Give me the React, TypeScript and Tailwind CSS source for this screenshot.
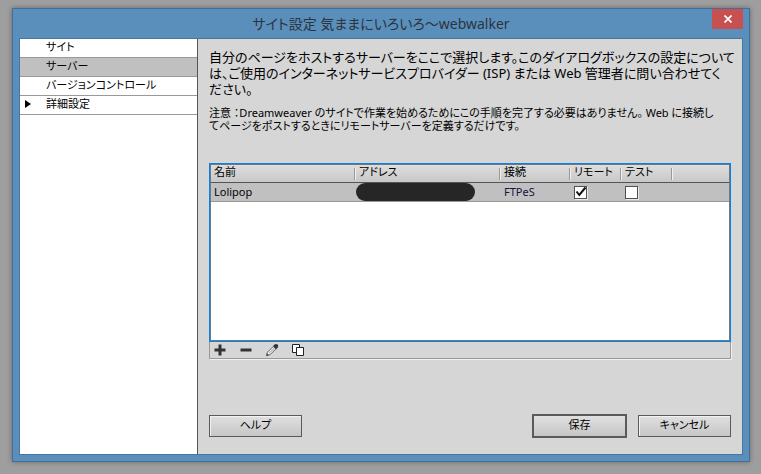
import { useState } from "react";

const categories = [
  { name: "サイト" },
  { name: "サーバー", selected: true },
  { name: "バージョンコントロール" },
  { name: "詳細設定", expandable: true },
];

const columns = ["名前", "アドレス", "接続", "リモート", "テスト"];

const buttonStyle =
  "h-[22px] w-[93px] border border-[#5a5a5a] bg-gradient-to-b from-[#e0e0e0] to-[#c6c6c6] pb-0.5 leading-4 shadow-[inset_1px_1px_0_#f2f2f2]";

function Checkbox({ label, initial }: { label: string; initial: boolean }) {
  const [checked, setChecked] = useState(initial);
  return (
    <span className="relative block size-[13px]">
      <input
        type="checkbox"
        aria-label={label}
        checked={checked}
        onChange={(e) => setChecked(e.target.checked)}
        className="block size-[13px] appearance-none border border-[#505050] bg-white shadow-[1px_1px_0_#e8e8e8]"
      />
      {checked && (
        <svg
          viewBox="0 0 13 13"
          className="pointer-events-none absolute inset-0 size-[13px]"
          fill="none"
          stroke="#111"
          strokeWidth="2"
        >
          <path d="M2.5 5.5 L5.3 9 L11.5 1.5" />
        </svg>
      )}
    </span>
  );
}

export default function App() {
  return (
    <main className="flex min-h-screen bg-[#9e9e9e] pt-2 pr-[11px] pb-3 pl-3 font-['Noto_Sans','Noto_Sans_CJK_JP',sans-serif] text-[11px] text-black [font-feature-settings:'palt']">
      <div className="flex min-w-0 flex-1 flex-col border border-[#3f6f9c] bg-[#5a8fbc] px-[6px] pb-[6px] shadow-[0_0_5px_rgba(0,0,0,0.35)]">
        {/* Title bar */}
        <header className="relative flex h-[29px] items-center justify-center">
          <h1 className="text-sm leading-6 text-[#2c343c]">
            サイト設定 気ままにいろいろ～webwalker
          </h1>
          <button
            aria-label="閉じる"
            className="absolute top-0 right-0 flex h-5 w-[31px] items-center justify-center bg-[#c75050]"
          >
            <svg
              viewBox="0 0 8 8"
              className="size-2"
              stroke="white"
              strokeWidth="1.7"
            >
              <path d="M0.5 0.5 L7.5 7.5 M7.5 0.5 L0.5 7.5" />
            </svg>
          </button>
        </header>

        <div className="flex flex-1 border border-[#47779f] bg-[#d6d6d6]">
          {/* Categories */}
          <nav className="w-[178px] shrink-0 border-r border-[#555] bg-white">
            <ul>
              {categories.map((item) => (
                <li
                  key={item.name}
                  className={`border-b border-[#999] ${item.selected ? "bg-[#c0c0c0]" : ""}`}
                >
                  <a
                    href="#"
                    className="flex h-[18px] items-center pb-0.5 pl-[5px]"
                  >
                    <span className="w-[21px]">
                      {item.expandable && (
                        <svg viewBox="0 0 6 8" className="h-2 w-1.5">
                          <path d="M0 0 L6 4 L0 8 Z" />
                        </svg>
                      )}
                    </span>
                    {item.name}
                  </a>
                </li>
              ))}
            </ul>
          </nav>

          {/* Server settings */}
          <section className="flex min-w-0 flex-1 flex-col px-[11px] pt-[10px] pb-4">
            <p className="text-[13px] leading-4 whitespace-nowrap">
              自分のページをホストするサーバーをここで選択します。このダイアログボックスの設定について
              <br />
              は、ご使用のインターネットサービスプロバイダー (ISP) または Web
              管理者に問い合わせてく
              <br />
              ださい。
            </p>
            <p className="mt-[9px] leading-[13px] whitespace-nowrap">
              注意 ：Dreamweaver
              のサイトで作業を始めるためにこの手順を完了する必要はありません。
              Web に接続し
              <br />
              てページをポストするときにリモートサーバーを定義するだけです。
            </p>

            <div className="mt-[31px] flex-1 border border-[#0a82e0] bg-white">
              <div className="h-full border border-[#6a7a88]">
                <table className="w-full table-fixed border-collapse">
                  <colgroup>
                    <col className="w-[145px]" />
                    <col className="w-[145px]" />
                    <col className="w-[70px]" />
                    <col className="w-[51px]" />
                    <col className="w-[51px]" />
                    <col />
                  </colgroup>
                  <thead>
                    <tr className="border-b border-[#555] bg-gradient-to-b from-[#dedede] to-[#c8c8c8]">
                      {columns.map((column) => (
                        <th key={column} className="p-0 text-left font-normal">
                          <span className="flex h-[17px] justify-between pl-[3px] leading-[14px]">
                            {column}
                            <span className="mt-[3px] h-3 w-0.5 border-r border-l border-r-[#f0f0f0] border-l-[#999]" />
                          </span>
                        </th>
                      ))}
                      <td />
                    </tr>
                  </thead>
                  <tbody>
                    <tr className="h-[19px] border-b border-[#999] bg-[#c0c0c0]">
                      <td className="p-0 pl-[3px] leading-4">Lolipop</td>
                      <td className="p-0">
                        <div className="h-[18px] w-[119px] rounded-full bg-[#262626]" />
                      </td>
                      <td className="p-0 pl-[3px] leading-4 text-[#14143c]">
                        FTPeS
                      </td>
                      <td className="p-0 pl-[3px]">
                        <Checkbox label="リモート" initial={true} />
                      </td>
                      <td className="p-0 pl-[3px]">
                        <Checkbox label="テスト" initial={false} />
                      </td>
                      <td />
                    </tr>
                  </tbody>
                </table>
              </div>
            </div>

            {/* Server list toolbar */}
            <div className="flex h-[17px] items-center gap-3 border border-t-0 border-[#999] pl-[3px] shadow-[1px_1px_0_#f0f0f0]">
              <button aria-label="追加" className="size-3.5">
                <svg viewBox="0 0 14 14" stroke="#333" strokeWidth="3">
                  <path d="M1.5 7 H12.5 M7 1.5 V12.5" />
                </svg>
              </button>
              <button aria-label="削除" className="size-3.5">
                <svg viewBox="0 0 14 14" stroke="#333" strokeWidth="3">
                  <path d="M1.5 7 H12.5" />
                </svg>
              </button>
              <button aria-label="編集" className="size-3.5">
                <svg viewBox="0 0 14 14">
                  <path
                    d="M1.5 12.8 L2.4 9.3 L8.2 3.5 L10.8 6 L5 11.8 Z"
                    fill="#eee"
                    stroke="#555"
                    strokeWidth="0.9"
                  />
                  <path
                    d="M8 3 L10 1.2 Q11.2 0.4 12.6 1.6 Q13.8 3 12.9 4.2 L11.2 6.2 Z"
                    fill="#333"
                  />
                  <path d="M1 13 L2 10.2 L4 12 Z" fill="#555" />
                  <path d="M4.2 10.2 L9.4 5" stroke="#888" strokeWidth="0.8" />
                </svg>
              </button>
              <button aria-label="複製" className="size-3.5">
                <svg
                  viewBox="0 0 14 14"
                  fill="white"
                  stroke="#222"
                  strokeWidth="1"
                >
                  <path d="M1.5 1.5 H8.5 V9.5 H1.5 Z" />
                  <path d="M5.5 4.5 H12.5 V12.5 H5.5 Z" />
                </svg>
              </button>
            </div>

            <footer className="mt-[55px] flex items-center">
              <button className={buttonStyle}>ヘルプ</button>
              <button className="ml-auto h-6 w-[95px] border-2 border-[#5a5a5a] bg-gradient-to-b from-[#e0e0e0] to-[#c6c6c6] pb-0.5 leading-4">
                保存
              </button>
              <button className={`ml-[11px] ${buttonStyle}`}>キャンセル</button>
            </footer>
          </section>
        </div>
      </div>
    </main>
  );
}
